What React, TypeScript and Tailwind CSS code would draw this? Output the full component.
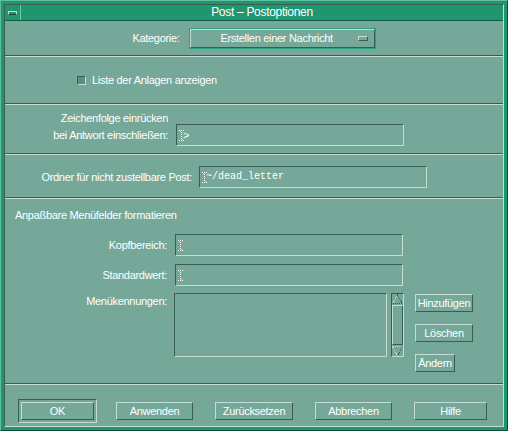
import React from "react";

// Motif / CDE "Post - Postoptionen" dialog

const raised = "border border-t-[#c4dcd4] border-l-[#c4dcd4] border-b-[#3a5c52] border-r-[#3a5c52]";
const sunken = "border border-t-[#3a5c52] border-l-[#3a5c52] border-b-[#c4dcd4] border-r-[#c4dcd4]";

function Sep() {
  return <div className="h-[2px] shrink-0 border-t border-t-[#3a5c52] border-b border-b-[#c4dcd4]" />;
}

function IBeam() {
  return (
    <svg width="5" height="11" viewBox="0 0 5 11" shapeRendering="crispEdges" fill="#ffffff" className="shrink-0">
      <rect x="0" y="0" width="1" height="1" />
      <rect x="2" y="0" width="1" height="1" />
      <rect x="4" y="0" width="1" height="1" />
      <rect x="2" y="2" width="1" height="1" />
      <rect x="2" y="4" width="1" height="1" />
      <rect x="2" y="6" width="1" height="1" />
      <rect x="2" y="8" width="1" height="1" />
      <rect x="0" y="10" width="1" height="1" />
      <rect x="2" y="10" width="1" height="1" />
      <rect x="4" y="10" width="1" height="1" />
      <rect x="1" y="1" width="1" height="1" fill="#c4dcd4" />
      <rect x="3" y="9" width="1" height="1" fill="#c4dcd4" />
    </svg>
  );
}

function TextField({ width, children }: { width: string; children?: React.ReactNode }) {
  return (
    <div className={`${width} h-[22px] shrink-0 ${sunken} flex items-center pl-[2px]`}>
      <IBeam />
      {children}
    </div>
  );
}

function Btn({ label, width }: { label: string; width: string }) {
  return (
    <div className={`${width} h-[18px] shrink-0 ${raised} flex items-center justify-center leading-[16px]`}>
      {label}
    </div>
  );
}

function Arrow({ down }: { down?: boolean }) {
  return (
    <svg width="11" height="11" viewBox="0 0 11 11" shapeRendering="crispEdges" className="shrink-0">
      {down ? (
        <g strokeWidth="1" fill="none" strokeDasharray="1 1">
          <path d="M0.5 1.5 L5.5 10.5" stroke="#c4dcd4" />
          <path d="M10.5 1.5 L5.5 10.5" stroke="#3a5c52" />
          <path d="M0.5 1.5 H10.5" stroke="#c4dcd4" />
        </g>
      ) : (
        <g strokeWidth="1" fill="none" strokeDasharray="1 1">
          <path d="M5.5 0.5 L0.5 9.5" stroke="#c4dcd4" />
          <path d="M5.5 0.5 L10.5 9.5" stroke="#3a5c52" />
          <path d="M0.5 9.5 H10.5" stroke="#3a5c52" />
        </g>
      )}
    </svg>
  );
}

export default function App() {
  return (
    <div className="w-[508px] h-[431px] bg-[#1f9670] border border-t-[#5cc09c] border-l-[#5cc09c] border-b-[#0c4a36] border-r-[#0c4a36] p-[3px] text-white text-[11px] tracking-[-0.3px] font-['Liberation_Sans',sans-serif]">
      <div className={`w-full h-full flex flex-col ${sunken} bg-[#75a899]`}>
        {/* title bar */}
        <div className="h-[16px] shrink-0 flex bg-[#1f9670] border-b border-b-[#0f5a42]">
          <div className="w-[16px] h-full flex items-center justify-center border-r border-r-[#6cc8a8]">
            <div className="w-[9px] h-[4px] border border-[#c4dcd4] border-b-[#0c4a36] bg-[#1f9670]" />
          </div>
          <div className="flex-1 flex items-center justify-center leading-[15px] text-[12px]">Post – Postoptionen</div>
        </div>

        {/* Kategorie */}
        <div className="h-[34px] shrink-0 flex items-center justify-center gap-[9px]">
          <span>Kategorie:</span>
          <div className="w-[187px] h-[21px] border border-[#2aa07c]">
            <div className={`w-full h-full ${raised} flex items-center`}>
              <span className="flex-1 text-center pl-[5px]">Erstellen einer Nachricht</span>
              <div className={`w-[10px] h-[5px] mr-[6px] ${raised}`} />
            </div>
          </div>
        </div>
        <Sep />

        {/* Liste der Anlagen */}
        <div className="h-[46px] shrink-0 flex items-center pl-[72px] gap-[6px]">
          <div className={`w-[9px] h-[9px] ${sunken} bg-[#5e8e80]`} />
          <span>Liste der Anlagen anzeigen</span>
        </div>
        <Sep />

        {/* Zeichenfolge */}
        <div className="h-[48px] shrink-0 flex items-end gap-[8px] pb-[7px]">
          <div className="w-[163px] text-right leading-[17px] pb-[2px]">
            <div>Zeichenfolge einrücken</div>
            <div>bei Antwort einschließen:</div>
          </div>
          <TextField width="w-[228px]">
            <span className="ml-[-1px] leading-[14px]">&gt;</span>
          </TextField>
        </div>
        <Sep />

        {/* Ordner */}
        <div className="h-[42px] shrink-0 flex items-center gap-[7px] pt-[2px]">
          <div className="w-[187px] text-right">Ordner für nicht zustellbare Post:</div>
          <TextField width="w-[228px]">
            <span className="font-['Liberation_Mono',monospace] text-[10px] tracking-normal leading-[14px] ml-[-1px]">~/dead_letter</span>
          </TextField>
        </div>
        <Sep />

        {/* Menüfelder */}
        <div className="h-[184px] shrink-0 flex flex-col pt-[7px]">
          <div className="pl-[10px] leading-[18px]">Anpaßbare Menüfelder formatieren</div>
          <div className="mt-[10px] flex items-center gap-[8px]">
            <div className="w-[162px] text-right">Kopfbereich:</div>
            <TextField width="w-[228px]" />
          </div>
          <div className="mt-[8px] flex items-center gap-[8px]">
            <div className="w-[162px] text-right">Standardwert:</div>
            <TextField width="w-[228px]" />
          </div>
          <div className="mt-[7px] flex items-start">
            <div className="w-[162px] text-right leading-[16px]">Menükennungen:</div>
            <div className={`ml-[7px] w-[213px] h-[64px] ${sunken}`} />
            <div className={`ml-[4px] w-[13px] h-[64px] ${sunken} flex flex-col items-center`}>
              <Arrow />
              <div className={`w-[11px] flex-1 ${raised}`} />
              <Arrow down />
            </div>
            <div className="ml-[11px] mt-[1px] flex flex-col items-start gap-[12px]">
              <Btn label="Hinzufügen" width="w-[58px]" />
              <Btn label="Löschen" width="w-[58px]" />
              <Btn label="Ändern" width="w-[40px]" />
            </div>
          </div>
        </div>
        <Sep />

        {/* Buttons */}
        <div className="flex-1 flex items-start justify-between px-[16px] pt-[17px]">
          <div className={`-m-[3px] p-[2px] ${sunken}`}>
            <Btn label="OK" width="w-[73px]" />
          </div>
          <Btn label="Anwenden" width="w-[77px]" />
          <Btn label="Zurücksetzen" width="w-[78px]" />
          <Btn label="Abbrechen" width="w-[77px]" />
          <Btn label="Hilfe" width="w-[73px]" />
        </div>
      </div>
    </div>
  );
}
